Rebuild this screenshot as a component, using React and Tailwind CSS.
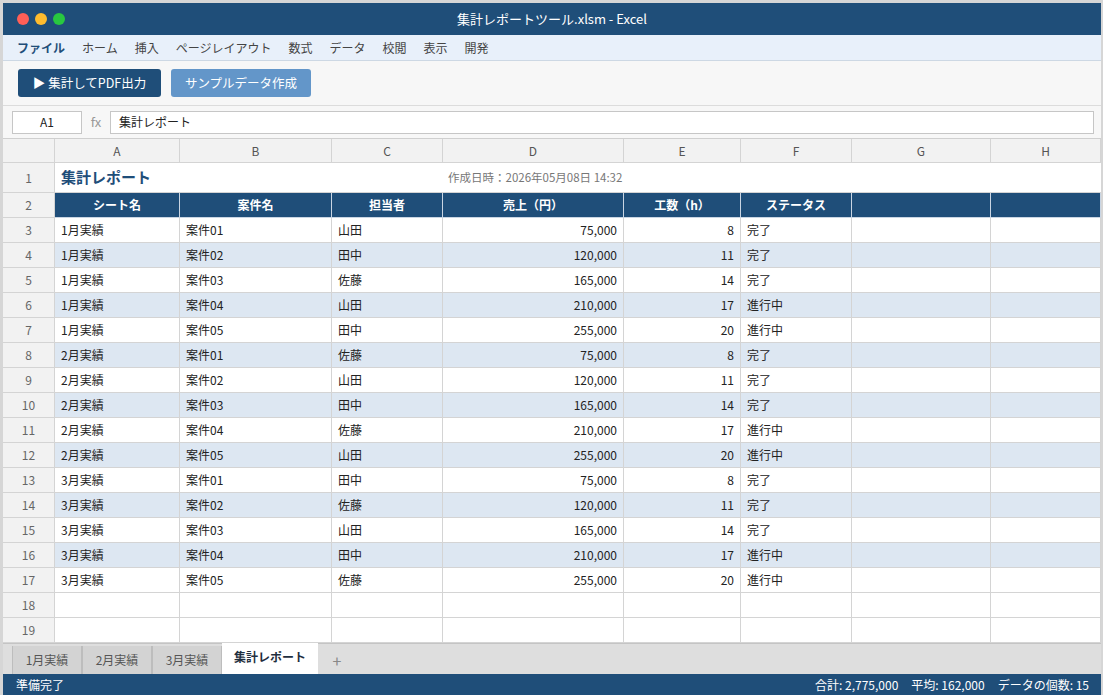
import React from 'react';

const cols = ['A', 'B', 'C', 'D', 'E', 'F', 'G', 'H'];
const gridCols = 'grid-cols-[52px_125px_152px_111px_181px_117px_111px_139px_110px]';

const people = [
  ['山田', '田中', '佐藤', '山田', '田中'],
  ['佐藤', '山田', '田中', '佐藤', '山田'],
  ['田中', '佐藤', '山田', '田中', '佐藤'],
];
const sales = ['75,000', '120,000', '165,000', '210,000', '255,000'];
const hours = [8, 11, 14, 17, 20];
const status = ['完了', '完了', '完了', '進行中', '進行中'];

const rows = [];
people.forEach((list, m) => {
  list.forEach((p, i) => {
    rows.push([`${m + 1}月実績`, `案件0${i + 1}`, p, sales[i], hours[i], status[i]]);
  });
});

const menu = ['ファイル', 'ホーム', '挿入', 'ページレイアウト', '数式', 'データ', '校閲', '表示', '開発'];

function RowHead({ n, h = 'h-[25px]' }) {
  return (
    <div className={`${h} bg-[#f2f2f2] border-r border-b border-[#d4d4d4] flex items-center justify-center text-[#666]`}>
      {n}
    </div>
  );
}

export default function App() {
  return (
    <div
      className="w-[1103px] h-[695px] bg-[#d6d6d6] pl-[3px] pt-[3px] pr-[2px] overflow-hidden text-[12px] text-[#222]"
      style={{ fontFamily: '"Noto Sans CJK JP", "Noto Sans", sans-serif' }}
    >
      <div className="h-full flex flex-col bg-white">
        {/* title bar */}
        <div className="h-[32px] bg-[#1f4e79] relative flex items-center justify-center text-white text-[13px]">
          <div className="absolute left-[14px] top-[10px] flex gap-[6px]">
            <span className="w-[12px] h-[12px] rounded-full bg-[#ff5f57]" />
            <span className="w-[12px] h-[12px] rounded-full bg-[#febc2e]" />
            <span className="w-[12px] h-[12px] rounded-full bg-[#28c840]" />
          </div>
          集計レポートツール.xlsm - Excel
        </div>

        {/* menu */}
        <div className="h-[26px] bg-[#e8f0fa] border-b border-[#cdd8e4] flex items-center px-[14px] gap-[17px] text-[#444]">
          {menu.map((m, i) => (
            <span key={m} className={i === 0 ? 'font-bold text-[#1f4e79]' : ''}>{m}</span>
          ))}
        </div>

        {/* toolbar */}
        <div className="h-[45px] bg-[#f7f7f7] border-b border-[#dcdcdc] flex items-center px-[15px] gap-[10px] text-[12.5px]">
          <button className="h-[28px] w-[143px] rounded-[3px] bg-[#1f4e79] text-white flex items-center justify-center">
            ▶ 集計してPDF出力
          </button>
          <button className="h-[28px] w-[140px] rounded-[3px] bg-[#6396c9] text-white flex items-center justify-center">
            サンプルデータ作成
          </button>
        </div>

        {/* formula bar */}
        <div className="h-[33px] bg-[#f7f7f7] border-b border-[#cfcfcf] flex items-center pl-[9px] pr-[7px]">
          <div className="w-[70px] h-[23px] bg-white border border-[#c6c6c6] flex items-center justify-center">A1</div>
          <span className="w-[28px] text-center text-[#999] text-[13px]">fx</span>
          <div className="flex-1 h-[23px] bg-white border border-[#c6c6c6] flex items-center px-[8px]">集計レポート</div>
        </div>

        {/* grid */}
        <div className={`grid ${gridCols}`}>
          <div className="h-[24px] bg-[#f2f2f2] border-r border-b border-[#d4d4d4]" />
          {cols.map((c) => (
            <div key={c} className="h-[24px] bg-[#f2f2f2] border-r border-b border-[#d4d4d4] flex items-center justify-center text-[#555]">
              {c}
            </div>
          ))}

          {/* row 1 */}
          <RowHead n={1} h="h-[30px]" />
          <div className="col-span-3 h-[30px] border-b border-[#d4d4d4] flex items-center px-[6px] text-[15px] font-bold text-[#1f4e79]">
            集計レポート
          </div>
          <div className="h-[30px] border-b border-[#d4d4d4] flex items-center px-[5px] text-[11.5px] text-[#777] whitespace-nowrap">
            作成日時：2026年05月08日 14:32
          </div>
          <div className="col-span-4 h-[30px] border-b border-[#d4d4d4]" />

          {/* row 2 header */}
          <RowHead n={2} />
          {['シート名', '案件名', '担当者', '売上（円）', '工数（h）', 'ステータス', '', ''].map((t, i) => (
            <div key={i} className="h-[25px] bg-[#1f4e79] border-r border-b border-[#c9d5e3] flex items-center justify-center text-white font-bold">
              {t}
            </div>
          ))}

          {rows.map((r, i) => {
            const bg = i % 2 === 1 ? 'bg-[#dde7f2]' : 'bg-white';
            const cell = `h-[25px] ${bg} border-r border-b border-[#d4d4d4] flex items-center px-[6px]`;
            return (
              <React.Fragment key={i}>
                <RowHead n={i + 3} />
                <div className={cell}>{r[0]}</div>
                <div className={cell}>{r[1]}</div>
                <div className={cell}>{r[2]}</div>
                <div className={`${cell} justify-end`}>{r[3]}</div>
                <div className={`${cell} justify-end`}>{r[4]}</div>
                <div className={cell}>{r[5]}</div>
                <div className={cell} />
                <div className={cell} />
              </React.Fragment>
            );
          })}

          {[18, 19].map((n) => (
            <React.Fragment key={n}>
              <RowHead n={n} />
              {cols.map((c) => (
                <div key={c} className="h-[25px] bg-white border-r border-b border-[#d4d4d4]" />
              ))}
            </React.Fragment>
          ))}
        </div>

        {/* sheet tabs */}
        <div className="h-[31px] bg-[#dedede] border-t border-[#c4c4c4] flex items-end pl-[9px] text-[#555]">
          {['1月実績', '2月実績', '3月実績'].map((t) => (
            <div key={t} className="h-[28px] w-[70px] bg-[#d3d3d3] border-l border-r border-[#bdbdbd] flex items-center justify-center">
              {t}
            </div>
          ))}
          <div className="h-[31px] w-[96px] -mt-px bg-white flex items-center justify-center font-bold text-[#1f2f40] pb-[3px]">
            集計レポート
          </div>
          <div className="h-[28px] w-[38px] flex items-center justify-center text-[16px] text-[#888]">+</div>
        </div>

        {/* status bar */}
        <div className="flex-1 bg-[#1f4e79] text-white flex items-center justify-between pl-[13px] pr-[12px]">
          <span>準備完了</span>
          <div className="flex gap-[13px]">
            <span>合計: 2,775,000</span>
            <span>平均: 162,000</span>
            <span>データの個数: 15</span>
          </div>
        </div>
      </div>
    </div>
  );
}
